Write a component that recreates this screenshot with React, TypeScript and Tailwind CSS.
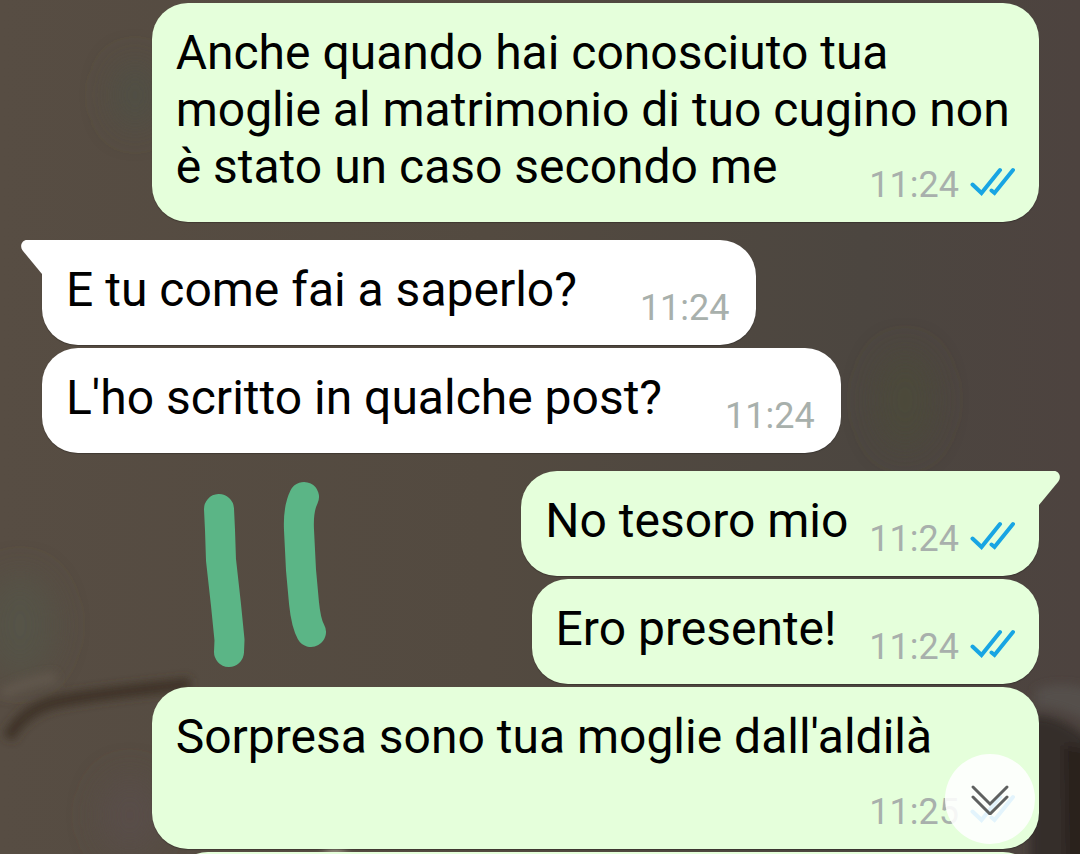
import React from "react";
import clsx from "clsx";

type Message = {
  text: string;
  time: string;
  mine: boolean;
  tail?: boolean;
};

const messages: Message[] = [
  {
    text: "Anche quando hai conosciuto tua moglie al matrimonio di tuo cugino non è stato un caso secondo me",
    time: "11:24",
    mine: true,
  },
  { text: "E tu come fai a saperlo?", time: "11:24", mine: false, tail: true },
  { text: "L'ho scritto in qualche post?", time: "11:24", mine: false },
  { text: "No tesoro mio", time: "11:24", mine: true, tail: true },
  { text: "Ero presente!\u00a0", time: "11:24", mine: true },
  { text: "Sorpresa sono tua moglie dall'aldilà", time: "11:25", mine: true },
];

const Wallpaper = () => (
  <svg
    className="absolute inset-0 w-full h-full"
    viewBox="0 0 1080 854"
    preserveAspectRatio="none"
    aria-hidden="true"
  >
    <defs>
      <linearGradient id="wall" x1="0" y1="0" x2="1" y2="0">
        <stop offset="0" stopColor="#574d43" />
        <stop offset="0.45" stopColor="#534a40" />
        <stop offset="0.8" stopColor="#4c4640" />
        <stop offset="1" stopColor="#4d433f" />
      </linearGradient>
      <filter id="soft" filterUnits="userSpaceOnUse" x="-60" y="-60" width="1200" height="974">
        <feGaussianBlur stdDeviation="16" />
      </filter>
      <filter id="crease" filterUnits="userSpaceOnUse" x="-60" y="-60" width="1200" height="974">
        <feGaussianBlur stdDeviation="5" />
      </filter>
    </defs>
    <rect width="1080" height="854" fill="url(#wall)" />
    <g filter="url(#soft)">
      <ellipse cx="135" cy="95" rx="22" ry="34" fill="#505045" />
      <ellipse cx="20" cy="625" rx="36" ry="52" fill="#545346" />
      <ellipse cx="905" cy="400" rx="30" ry="50" fill="#4c493b" />
      <ellipse cx="130" cy="815" rx="30" ry="40" fill="#594e48" />
    </g>
    <g filter="url(#crease)">
      <path d="M1036 690 Q1060 680 1090 690 V722 Q1060 706 1036 706 Z" fill="#554f4b" />
      <path d="M1030 716 Q1056 712 1090 740 V870 H1030 Z" fill="#352f2c" />
      <path d="M1064 745 L1090 750 V870 H1066 Z" fill="#29221f" />
    </g>
    <g filter="url(#crease)" fill="none">
      <path d="M2 694 Q30 680 56 678" stroke="#62584e" strokeWidth="10" />
      <path d="M8 738 Q24 708 60 701 T190 684" stroke="#3c3228" strokeWidth="12" />
      <path d="M325 851 H345" stroke="#a39b8c" strokeWidth="8" />
    </g>
  </svg>
);

const ReadTicks = () => (
  <svg width="45" height="30" viewBox="0 0 45 30" fill="none" role="img" aria-label="Letto">
    <g stroke="#18a5e3" strokeWidth="4" strokeLinecap="round">
      <path d="M2.5 17.5 L11.5 26 L30 3" />
      <path d="M21.5 23.5 L24.5 26 L43 3" />
    </g>
  </svg>
);

const Tail = ({ mine }: { mine: boolean }) => (
  <svg
    className={clsx(
      "absolute top-0",
      mine ? "left-full text-[#e5ffdb]" : "right-full text-white -scale-x-100"
    )}
    width="21"
    height="34"
    viewBox="0 0 21 34"
    aria-hidden="true"
  >
    <path d="M0 0 H15 C20 0 23 6 19 11 L0 34 Z" fill="currentColor" />
  </svg>
);

const Bubble = ({ text, time, mine, tail }: Message) => (
  <li
    className={clsx(
      "relative flow-root max-w-[89%] rounded-[36px] pl-6 pt-[21px] pb-[19px] text-[48px] leading-[57px] text-black shadow-[0_1px_1px_rgba(0,0,0,0.25)]",
      mine ? "self-end bg-[#e5ffdb] pr-6" : "self-start bg-white pr-[26px]",
      tail && (mine ? "rounded-tr-none" : "rounded-tl-none"),
      tail && "mt-[15px]"
    )}
  >
    {tail && <Tail mine={mine} />}
    <span>{text}</span>
    {/* sits on the last line when it fits, otherwise drops below */}
    <span
      className={clsx(
        "float-right flex items-start gap-[11px] pt-[29px]",
        mine ? "pl-[21px]" : "pl-[63px]"
      )}
    >
      <time className="text-[36px] leading-9 text-[#a8b0ac]">{time}</time>
      {mine && <ReadTicks />}
    </span>
  </li>
);

const Scribble = () => (
  <svg
    className="absolute left-[200px] top-[480px]"
    width="130"
    height="190"
    viewBox="200 480 130 190"
    fill="none"
    stroke="#5bb586"
    strokeWidth="30"
    strokeLinecap="round"
    strokeLinejoin="round"
    aria-hidden="true"
  >
    <path d="M219 509 L220 530 L221 560 L226 605 L229.500 640 L229 652" />
    <path d="M304 497 Q298 509 299 530 L301 570 L304 603 Q306 623 311 632" />
  </svg>
);

const App = () => {
  return (
    <main className="relative h-screen overflow-hidden bg-[#524940] font-[Roboto,sans-serif]">
      <Wallpaper />
      <ul className="relative flex flex-col gap-[3px] pt-[3px] pl-[42px] pr-[41px]">
        {messages.map((message) => (
          <Bubble key={message.text} {...message} />
        ))}
        <li className="self-end w-[87%] h-[105px] rounded-[36px] bg-[#e5ffdb]" />
      </ul>
      <Scribble />
      <button
        type="button"
        aria-label="Vai in fondo"
        className="absolute right-[45px] bottom-[10px] flex items-center justify-center w-[90px] h-[90px] rounded-full bg-white/88"
      >
        <svg
          width="40"
          height="32"
          viewBox="0 0 40 32"
          fill="none"
          stroke="#5f6160"
          strokeWidth="3"
          strokeLinecap="round"
        >
          <path d="M3 4 L20 21 L37 4" />
          <path d="M3 14 L20 31 L37 14" />
        </svg>
      </button>
    </main>
  );
};

export default App;
